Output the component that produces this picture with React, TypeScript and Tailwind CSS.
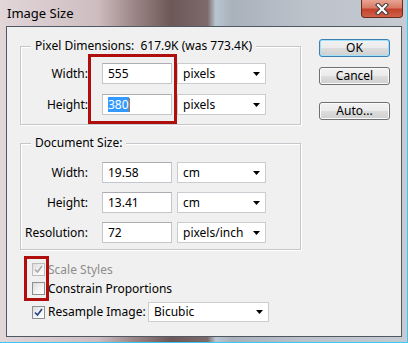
import React from "react";

function Arrow() {
  return (
    <svg width="7" height="4" viewBox="0 0 7 4" className="block">
      <path d="M0 0H7L3.5 4Z" fill="#000" />
    </svg>
  );
}

function Select({ text, wide }: { text: string; wide?: boolean }) {
  return (
    <div
      className={
        (wide ? "w-[121px] h-[20px]" : "w-[89px] h-[21px]") +
        " flex items-center justify-between bg-white border border-[#c9ccd1] pl-[5px] pr-[5px]"
      }
    >
      <span className="leading-none">{text}</span>
      <Arrow />
    </div>
  );
}

function Input({ children }: { children: React.ReactNode }) {
  return (
    <div className="w-[70px] h-[21px] flex items-center bg-white border border-[#c3c7cc] border-t-[#abadb3] pl-[5px]">
      {children}
    </div>
  );
}

function Row({ label, value, unit }: { label: string; value: React.ReactNode; unit: string }) {
  return (
    <div className="flex items-center h-[21px]">
      <div className="w-[67px] text-right leading-none">{label}</div>
      <div className="ml-[14px]">
        <Input>{value}</Input>
      </div>
      <div className="ml-[5px]">
        <Select text={unit} />
      </div>
    </div>
  );
}

function Check({ state }: { state: "disabled" | "off" | "on" }) {
  const border = state === "disabled" ? "border-[#bcbcbc]" : "border-[#8e8f8f]";
  return (
    <div className={"w-[13px] h-[13px] border " + border + " bg-[linear-gradient(135deg,#dcdcdc,#f6f6f6_60%,#ffffff)] flex items-center justify-center shrink-0"}>
      {state !== "off" && (
        <svg width="9" height="9" viewBox="0 0 9 9">
          <path
            d="M1 4.5L3.5 7L8 1"
            fill="none"
            stroke={state === "on" ? "#22418f" : "#a9a9a9"}
            strokeWidth="1.6"
          />
        </svg>
      )}
    </div>
  );
}

function Button({ label, def }: { label: string; def?: boolean }) {
  return (
    <div
      className={
        "w-[71px] h-[18px] rounded-[3px] border flex items-center justify-center leading-none bg-[linear-gradient(180deg,#f2f2f2_0%,#ebebeb_50%,#dddddd_51%,#cfcfcf_100%)] " +
        (def
          ? "border-[#3c7fb1] shadow-[inset_0_0_0_1px_#9fe2fd]"
          : "border-[#707070] shadow-[inset_0_0_0_1px_#fbfbfb]")
      }
    >
      {label}
    </div>
  );
}

export default function App() {
  return (
    <div className="relative w-[408px] h-[343px] overflow-hidden text-[12px] text-black [font-family:'Noto_Sans','DejaVu_Sans',sans-serif] bg-[linear-gradient(90deg,#e2d6d9_0%,#cdbdc1_24%,#9c8585_33%,#6d5858_42%,#7d6a6a_51%,#b9c6d2_53%,#a9b1bb_57%,#bcc2ca_75%,#c6cbd2_100%)] border-b border-r border-[#3cc8f0]">
      {/* title bar */}
      <div className="h-[26px] flex items-center pl-[7px] pt-[1px] text-[13px]">Image Size</div>
      <div className="absolute left-[361px] top-0 w-[42px] h-[18px] rounded-b-[4px] border border-t-0 border-[#6b2a20] bg-[linear-gradient(180deg,#e9a493_0%,#d87a66_45%,#c3422c_55%,#d0614a_100%)] flex items-center justify-center">
        <svg width="14" height="12" viewBox="0 0 14 12">
          <path d="M3 2L11 10M11 2L3 10" stroke="#3b3b3b" strokeWidth="4.2" strokeLinecap="square" />
          <path d="M3 2L11 10M11 2L3 10" stroke="#ffffff" strokeWidth="2.2" strokeLinecap="square" />
        </svg>
      </div>

      {/* client */}
      <div className="ml-[6px] w-[396px] h-[311px] border border-[#4f5863] bg-[#f0f0f0] flex">
        <div className="pl-[13px] pt-[19px] w-[294px] shrink-0">
          {/* Pixel Dimensions */}
          <div className="relative h-[79px] w-[281px] border border-[#c4c8cc] shadow-[inset_1px_1px_0_#ffffff,1px_1px_0_#ffffff]">
            <span className="absolute left-[10px] top-[-9px] px-[4px] bg-[#f0f0f0] leading-[16px] whitespace-pre">
              {"Pixel Dimensions:  617.9K (was 773.4K)"}
            </span>
            <div className="pt-[16px] flex flex-col gap-[10px]">
              <Row label="Width:" value="555" unit="pixels" />
              <Row
                label="Height:"
                value={
                  <span className="flex items-center">
                    <span className="bg-[#3399ff] text-white leading-[15px]">380</span>
                    <span className="w-[1px] h-[14px] bg-[#c07020]" />
                  </span>
                }
                unit="pixels"
              />
            </div>
          </div>

          {/* Document Size */}
          <div className="relative mt-[18px] h-[107px] w-[281px] border border-[#c4c8cc] shadow-[inset_1px_1px_0_#ffffff,1px_1px_0_#ffffff]">
            <span className="absolute left-[10px] top-[-9px] px-[4px] bg-[#f0f0f0] leading-[16px] whitespace-pre">
              Document Size:
            </span>
            <div className="pt-[18px] flex flex-col gap-[9px]">
              <Row label="Width:" value="19.58" unit="cm" />
              <Row label="Height:" value="13.41" unit="cm" />
              <Row label="Resolution:" value="72" unit="pixels/inch" />
            </div>
          </div>

          {/* checkboxes */}
          <div className="mt-[10px] pl-[12px]">
            <div className="h-[19px] flex items-center">
              <Check state="disabled" />
              <span className="ml-[3px] text-[#8d8d8d] leading-none">Scale Styles</span>
            </div>
            <div className="h-[19px] flex items-center">
              <Check state="off" />
              <span className="ml-[3px] leading-none">Constrain Proportions</span>
            </div>
            <div className="mt-[4px] h-[20px] flex items-center">
              <Check state="on" />
              <span className="ml-[3px] w-[100px] leading-none">Resample Image:</span>
              <Select text="Bicubic" wide />
            </div>
          </div>
        </div>

        {/* buttons */}
        <div className="ml-[18px] pt-[12px] flex flex-col">
          <Button label="OK" def />
          <div className="mt-[10px]">
            <Button label="Cancel" />
          </div>
          <div className="mt-[17px]">
            <Button label="Auto..." />
          </div>
        </div>
      </div>

      {/* red annotation rectangles */}
      <div className="absolute left-[88px] top-[54px] w-[89px] h-[70px] border-[3px] border-[#b00d0d]" />
      <div className="absolute left-[24px] top-[256px] w-[25px] h-[45px] border-[3px] border-[#b00d0d]" />
    </div>
  );
}
